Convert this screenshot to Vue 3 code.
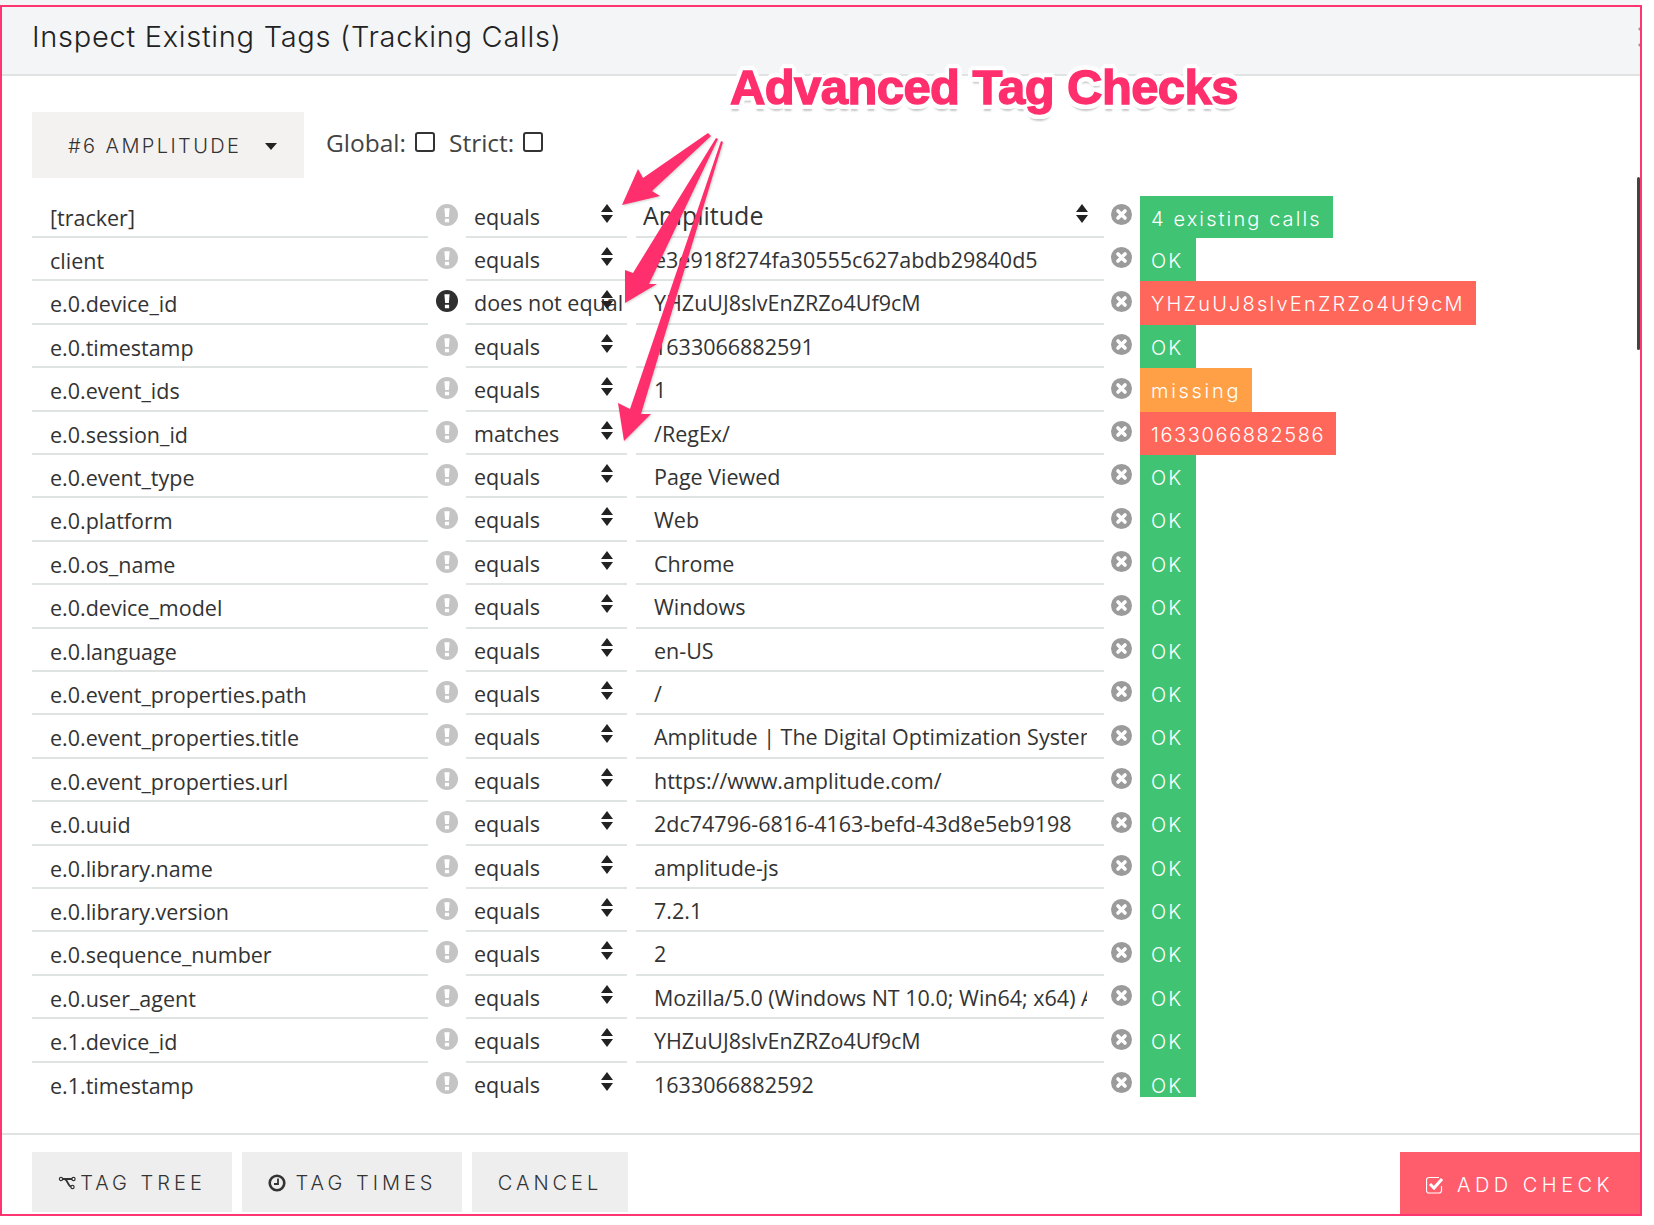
<script setup>
const rows = [
  { k: '[tracker]', op: 'equals', v: 'Amplitude', t: '4 existing calls', c: 'ok', first: true },
  { k: 'client', op: 'equals', v: 'e3e918f274fa30555c627abdb29840d5', t: 'OK', c: 'ok' },
  { k: 'e.0.device_id', op: 'does not equal', v: 'YHZuUJ8slvEnZRZo4Uf9cM', t: 'YHZuUJ8slvEnZRZo4Uf9cM', c: 'bad', active: true },
  { k: 'e.0.timestamp', op: 'equals', v: '1633066882591', t: 'OK', c: 'ok' },
  { k: 'e.0.event_ids', op: 'equals', v: '1', t: 'missing', c: 'warn' },
  { k: 'e.0.session_id', op: 'matches', v: '/RegEx/', t: '1633066882586', c: 'bad num' },
  { k: 'e.0.event_type', op: 'equals', v: 'Page Viewed', t: 'OK', c: 'ok' },
  { k: 'e.0.platform', op: 'equals', v: 'Web', t: 'OK', c: 'ok' },
  { k: 'e.0.os_name', op: 'equals', v: 'Chrome', t: 'OK', c: 'ok' },
  { k: 'e.0.device_model', op: 'equals', v: 'Windows', t: 'OK', c: 'ok' },
  { k: 'e.0.language', op: 'equals', v: 'en-US', t: 'OK', c: 'ok' },
  { k: 'e.0.event_properties.path', op: 'equals', v: '/', t: 'OK', c: 'ok' },
  { k: 'e.0.event_properties.title', op: 'equals', v: 'Amplitude | The Digital Optimization System', t: 'OK', c: 'ok' },
  { k: 'e.0.event_properties.url', op: 'equals', v: 'https://www.amplitude.com/', t: 'OK', c: 'ok' },
  { k: 'e.0.uuid', op: 'equals', v: '2dc74796-6816-4163-befd-43d8e5eb9198', t: 'OK', c: 'ok' },
  { k: 'e.0.library.name', op: 'equals', v: 'amplitude-js', t: 'OK', c: 'ok' },
  { k: 'e.0.library.version', op: 'equals', v: '7.2.1', t: 'OK', c: 'ok' },
  { k: 'e.0.sequence_number', op: 'equals', v: '2', t: 'OK', c: 'ok' },
  { k: 'e.0.user_agent', op: 'equals', v: 'Mozilla/5.0 (Windows NT 10.0; Win64; x64) AppleWebKit', t: 'OK', c: 'ok' },
  { k: 'e.1.device_id', op: 'equals', v: 'YHZuUJ8slvEnZRZo4Uf9cM', t: 'OK', c: 'ok' },
  { k: 'e.1.timestamp', op: 'equals', v: '1633066882592', t: 'OK', c: 'ok' }
]
</script>

<template>
  <div class="page">
    <div class="strip"></div>
    <div class="frame">
      <header class="head">
        <h1>Inspect Existing Tags (Tracking Calls)</h1>
        <svg class="close" viewBox="0 0 20 20"><path d="M1 1l18 18M19 1L1 19" stroke="#999" stroke-width="3" /></svg>
      </header>

      <div class="tools">
        <button class="drop">#6 AMPLITUDE<i class="caret"></i></button>
        <label class="opt">Global:<i class="box"></i></label>
        <label class="opt">Strict:<i class="box"></i></label>
      </div>

      <div class="rows">
        <div v-for="r in rows" :key="r.k" class="row" :class="{ first: r.first }">
          <div class="cell key">{{ r.k }}</div>
          <svg class="bang" :class="{ on: r.active }" viewBox="0 0 21 21">
            <circle cx="10.5" cy="10.5" r="10.5" />
            <path d="M8 4h5l-.7 8.5H8.700zM8.500 14h4v3.500h-4z" fill="#fff" />
          </svg>
          <div class="cell op">
            {{ r.op }}
            <svg class="sort" viewBox="0 0 12 20"><path d="M6 0l6 8H0zM0 11h12l-6 8z" /></svg>
          </div>
          <div class="gap"></div>
          <div class="cell val" :class="{ big: r.first }">
            <span class="clip">{{ r.v }}</span>
            <svg v-if="r.first" class="sort right" viewBox="0 0 12 20"><path d="M6 0l6 8H0zM0 11h12l-6 8z" /></svg>
          </div>
          <svg class="del" viewBox="0 0 21 21">
            <circle cx="10.500" cy="10.500" r="10.500" />
            <path d="M7 7l7 7M14 7l-7 7" stroke="#fff" stroke-width="3.600" stroke-linecap="round" />
          </svg>
          <div class="tag" :class="r.c">{{ r.t }}</div>
        </div>
      </div>

      <footer class="foot">
        <div class="left">
          <button class="btn">
            <svg class="ic" viewBox="0 0 18 14"><path d="M3 3h11M6 3c3 0 3 7 7 8" fill="none" stroke="#333" stroke-width="1.800" /><circle cx="2.500" cy="3" r="1.600" fill="#fff" stroke="#333" stroke-width="1.200" /><circle cx="15" cy="3" r="1.600" fill="#fff" stroke="#333" stroke-width="1.200" /><circle cx="14" cy="11" r="1.600" fill="#fff" stroke="#333" stroke-width="1.200" /></svg>TAG TREE
          </button>
          <button class="btn times">
            <svg class="ic clock" viewBox="0 0 18 18"><circle cx="9" cy="9" r="7.300" fill="none" stroke="#333" stroke-width="2.600" /><path d="M10 4.500v5.500H6" fill="none" stroke="#333" stroke-width="1.800" /></svg>TAG TIMES
          </button>
          <button class="btn cancel">CANCEL</button>
        </div>
        <button class="add">
          <svg class="ic check" viewBox="0 0 18 18"><path d="M15.500 10v4.500a2.500 2.500 0 0 1-2.500 2.500H3a2.500 2.500 0 0 1-2.500-2.500V4A2.500 2.500 0 0 1 3 1.500h10" fill="none" stroke="#fff" stroke-width="1.200" /><path d="M4 8l4 4 8-9" fill="none" stroke="#fff" stroke-width="3" /></svg>ADD CHECK
        </button>
      </footer>

      <div class="scrollbar"></div>
    </div>

    <div class="note">Advanced Tag Checks</div>
    <svg class="arrows" viewBox="0 0 1654 1225">
      <path d="M708 133L643 178L638 169L622 205L660 196L652 191L711 136Z" />
      <path d="M716 138L633 273L625 270L625 303L657 284L649 284L718 139Z" />
      <path d="M721 141L630 409L618 403L624 441L651 414L641 414L723 142Z" />
    </svg>
  </div>
</template>

<style scoped>
.page { position: relative; width: 1654px; height: 1225px; overflow: hidden; background: #fff; font-family: "Open Sans", sans-serif; color: #333; }
.strip { width: 1640px; height: 5px; background: #f4f5f7; }
.frame { position: relative; width: 1642px; height: 1211px; box-sizing: border-box; border: 2px solid #ff3572; overflow: hidden; }
.head { height: 69px; box-sizing: border-box; background: #f4f5f7; border-bottom: 2px solid #dfe3e2; padding: 0 30px 8px; display: flex; align-items: center; position: relative; }
h1 { margin: 0; font: 300 29px/1 Inter, sans-serif; color: #222; letter-spacing: .72px; }
.close { position: absolute; right: -18px; top: 20px; width: 20px; height: 20px; }
.tools { display: flex; align-items: center; padding: 36px 0 0 30px; }
.drop { width: 272px; height: 66px; border: 0; background: #f4f1f1; display: flex; align-items: center; padding: 2px 0 0 36px; font: 300 20px/1 Inter, sans-serif; letter-spacing: 2.400px; color: #333; margin-right: 22px; }
.caret { margin-left: 24px; border: 6.500px solid transparent; border-top: 7px solid #222; border-bottom: 0; }
.opt { display: flex; align-items: center; font-size: 24.500px; color: #444; margin: -6px 14px 0 0; }
.box { width: 16px; height: 16px; margin-left: 9px; border: 2px solid #333; border-radius: 3px; }
.rows { margin-top: 16.500px; }
.row { display: grid; grid-template-columns: 396px 38px 161px 9px 468px 36px auto; justify-content: start; height: 43.420px; margin-left: 30px; }
.row:last-child { height: 34px; }
.row:last-child .cell { border-bottom: 0; height: 33px; }
.cell { position: relative; box-sizing: border-box; height: 43.420px; border-bottom: 2px solid #dfe3e2; font-size: 21.500px; line-height: 46px; color: #333; white-space: nowrap; }
.key { padding-left: 18px; }
.op { padding-left: 8px; line-height: 44px; }
.val { padding-left: 18px; line-height: 44px; }
.val.big { font-size: 25px; line-height: 40px; padding-left: 7px; }
.val.big .sort { top: 9px; }
.clip { display: block; width: 433px; overflow: hidden; }
.gap { height: 1px; }
.bang { width: 22px; height: 22px; margin: 9px 0 0 7.500px; fill: #c4c4c4; }
.bang.on { fill: #2f2f2f; }
.del { width: 21px; height: 21px; margin: 9.500px 0 0 7px; fill: #9b9b9b; }
.sort { position: absolute; left: 135px; top: 9px; width: 12px; height: 20px; fill: #222; }
.sort.right { left: 440px; }
.tag { justify-self: start; color: #fff; font: 300 20px/46px Inter, sans-serif; letter-spacing: 2.100px; padding: 0 11px; height: 100%; overflow: hidden; white-space: nowrap; }
.row.first .tag { margin-top: 1.400px; height: 42px; }
.ok { background: #40c473; min-width: 34px; }
.bad { background: #ff675a; letter-spacing: 2.200px; }
.num { letter-spacing: 1.600px; }
.warn { background: #ffa047; letter-spacing: 2.700px; }
.foot { position: absolute; left: 0; right: 0; bottom: 0; height: 81px; box-sizing: border-box; border-top: 2px solid #dfe3e2; display: flex; justify-content: space-between; padding: 17px 0 0 30px; }
.left { display: flex; gap: 10px; }
.btn { height: 60px; width: 200px; border: 0; background: #eee; display: flex; align-items: center; justify-content: center; font: 300 20px/1 Inter, sans-serif; letter-spacing: 4px; color: #333; padding: 2px 0 0; }
.btn.times { width: 220px; }
.btn.cancel { width: 156px; }
.ic { width: 19px; height: 14px; margin-right: 3px; }
.clock { width: 18px; height: 18px; margin-right: 10px; }
.add { width: 240px; height: 62px; border: 0; background: #ff5c6c; color: #fff; display: flex; align-items: center; justify-content: center; font: 300 20px/1 Inter, sans-serif; letter-spacing: 4.500px; padding: 4px 0 0; }
.check { width: 18px; height: 18px; margin-right: 13px; }
.scrollbar { position: absolute; right: 0; top: 170px; width: 3px; height: 173px; background: #444; border-radius: 2px; }
.note {
  position: absolute; left: 730px; top: 63px;
  font: 700 49px/1 "Liberation Sans", sans-serif; letter-spacing: -.6px; color: #ff2e6c;
  -webkit-text-stroke: 1.400px #ff2e6c;
  text-shadow:
    5px 0 0 #fff, -5px 0 0 #fff, 0 5px 0 #fff, 0 -5px 0 #fff,
    3.500px 3.500px 0 #fff, -3.500px 3.500px 0 #fff, 3.500px -3.500px 0 #fff, -3.500px -3.500px 0 #fff,
    4.600px 2px 0 #fff, -4.600px 2px 0 #fff, 4.600px -2px 0 #fff, -4.600px -2px 0 #fff,
    2px 4.600px 0 #fff, -2px 4.600px 0 #fff, 2px -4.600px 0 #fff, -2px -4.600px 0 #fff,
    0 7px 2px rgba(0,0,0,.22);
}
.arrows { position: absolute; left: 0; top: 0; width: 1654px; height: 1225px; fill: #ff2e6c; pointer-events: none; filter: drop-shadow(1px 1px 1px rgba(0,0,0,.18)); }
</style>
